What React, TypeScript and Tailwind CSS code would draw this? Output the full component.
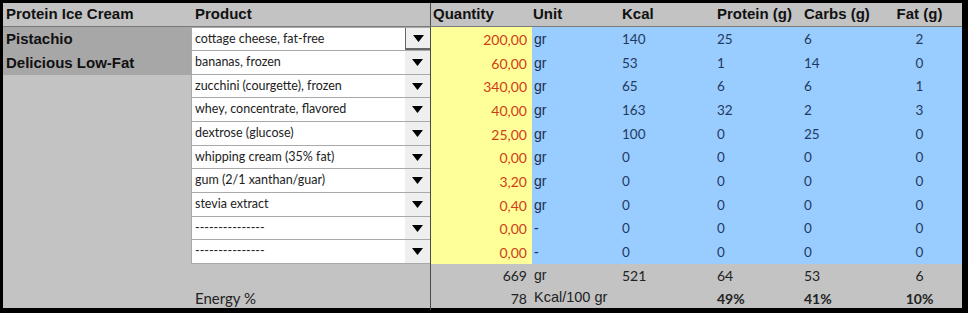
import React from 'react'

const ROWS = [
  { p: 'cottage cheese, fat-free', q: '200,00', u: 'gr', k: '140', pr: '25', c: '6', f: '2' },
  { p: 'bananas, frozen', q: '60,00', u: 'gr', k: '53', pr: '1', c: '14', f: '0' },
  { p: 'zucchini (courgette), frozen', q: '340,00', u: 'gr', k: '65', pr: '6', c: '6', f: '1' },
  { p: 'whey, concentrate, flavored', q: '40,00', u: 'gr', k: '163', pr: '32', c: '2', f: '3' },
  { p: 'dextrose (glucose)', q: '25,00', u: 'gr', k: '100', pr: '0', c: '25', f: '0' },
  { p: 'whipping cream (35% fat)', q: '0,00', u: 'gr', k: '0', pr: '0', c: '0', f: '0' },
  { p: 'gum (2/1 xanthan/guar)', q: '3,20', u: 'gr', k: '0', pr: '0', c: '0', f: '0' },
  { p: 'stevia extract', q: '0,40', u: 'gr', k: '0', pr: '0', c: '0', f: '0' },
  { p: '---------------', q: '0,00', u: '-', k: '0', pr: '0', c: '0', f: '0' },
  { p: '---------------', q: '0,00', u: '-', k: '0', pr: '0', c: '0', f: '0' },
]

const HEIGHTS = [
  'h-[24px]', 'h-[24px]', 'h-[23px]', 'h-[24px]', 'h-[24px]',
  'h-[23px]', 'h-[24px]', 'h-[24px]', 'h-[23px]', 'h-[24px]',
]

const LEFT = ['Pistachio', 'Delicious Low-Fat']

const GRID = 'grid grid-cols-[188px_239px_102px_88px_95px_87px_75px_85px]'
const arial = "font-[family-name:'Liberation_Sans',Arial,sans-serif]"
const calibri = "font-[family-name:Lato,sans-serif]"

function Arrow() {
  return (
    <svg width="11" height="7" viewBox="0 0 11 7" className="block">
      <polygon points="0,0 11,0 5.5,7" fill="#000" />
    </svg>
  )
}

export default function App() {
  return (
    <div className="h-[313px] w-[968px] overflow-hidden bg-black pb-[5px] pl-[3px] pr-[6px] pt-[3px]">
      <div className="flex h-full flex-col bg-[#c3c3c3]">
        {/* header */}
        <div className={`${GRID} h-[24px] items-center border-b border-[#7a7a7a] ${arial} text-[15px] font-bold text-[#111]`}>
          <div className="pl-[3px]">Protein Ice Cream</div>
          <div className="pl-[4px]">Product</div>
          <div className="flex h-full items-center border-l border-[#4a4a4a] pl-[2px]">Quantity</div>
          <div className="pl-[1px]">Unit</div>
          <div className="pl-[2px]">Kcal</div>
          <div className="pl-[2px]">Protein (g)</div>
          <div className="pl-[2px]">Carbs (g)</div>
          <div className="text-center">Fat (g)</div>
        </div>

        {/* data rows */}
        {ROWS.map((r, i) => (
          <div key={i} className={`${GRID} ${HEIGHTS[i]}`}>
            <div
              className={`flex items-center pl-[3px] ${arial} text-[15px] font-bold text-[#111] ${
                i < 2 ? 'bg-[#a7a7a7]' : ''
              }`}
            >
              {LEFT[i] ?? ''}
            </div>
            <div
              className={`flex items-stretch border-b border-l border-[#a9a9a9] bg-white ${
                i === 0 ? 'border-t' : ''
              }`}
            >
              <div className={`flex flex-1 items-center pl-[3px] ${calibri} text-[12.5px] text-[#222]`}>
                {r.p}
              </div>
              <div
                className={`flex w-[25px] items-center justify-center bg-[#efefef] ${
                  i === 0 ? 'border-b-2 border-l border-[#666]' : ''
                }`}
              >
                <Arrow />
              </div>
            </div>
            <div
              className={`flex items-center justify-end border-l border-[#4a4a4a] bg-[#ffff99] pr-[5px] ${calibri} text-[14px] text-[#cf3c16]`}
            >
              {r.q}
            </div>
            <div className={`flex items-center bg-[#99ccff] pl-[2px] ${arial} text-[14px] text-[#1d2f4d]`}>
              {r.u}
            </div>
            <div className={`flex items-center bg-[#99ccff] pl-[2px] ${calibri} text-[13.5px] text-[#1f3a60]`}>
              {r.k}
            </div>
            <div className={`flex items-center bg-[#99ccff] pl-[2px] ${calibri} text-[13.5px] text-[#1f3a60]`}>
              {r.pr}
            </div>
            <div className={`flex items-center bg-[#99ccff] pl-[2px] ${calibri} text-[13.5px] text-[#1f3a60]`}>
              {r.c}
            </div>
            <div
              className={`flex items-center justify-center bg-[#99ccff] ${calibri} text-[13.5px] text-[#1f3a60]`}
            >
              {r.f}
            </div>
          </div>
        ))}

        {/* totals */}
        <div className={`${GRID} h-[23px] text-[#222]`}>
          <div />
          <div />
          <div className={`flex items-center justify-end border-l border-[#4a4a4a] pr-[5px] ${calibri} text-[14px]`}>
            669
          </div>
          <div className={`flex items-center pl-[2px] ${arial} text-[14px]`}>gr</div>
          <div className={`flex items-center pl-[2px] ${calibri} text-[14px]`}>521</div>
          <div className={`flex items-center pl-[2px] ${calibri} text-[14px]`}>64</div>
          <div className={`flex items-center pl-[2px] ${calibri} text-[14px]`}>53</div>
          <div className={`flex items-center justify-center ${calibri} text-[14px]`}>6</div>
        </div>

        {/* energy */}
        <div className={`${GRID} h-[21px] text-[#222]`}>
          <div />
          <div className={`flex items-center pl-[4px] ${calibri} text-[15px]`}>Energy %</div>
          <div className={`flex items-center justify-end border-l border-[#4a4a4a] pr-[5px] ${calibri} text-[14px]`}>
            78
          </div>
          <div className={`col-span-2 flex items-center pl-[2px] ${arial} text-[14.5px]`}>Kcal/100 gr</div>
          <div className={`flex items-center pl-[2px] ${calibri} text-[14px] font-bold`}>49%</div>
          <div className={`flex items-center pl-[2px] ${calibri} text-[14px] font-bold`}>41%</div>
          <div className={`flex items-center justify-center ${calibri} text-[14px] font-bold`}>10%</div>
        </div>
      </div>
    </div>
  )
}
